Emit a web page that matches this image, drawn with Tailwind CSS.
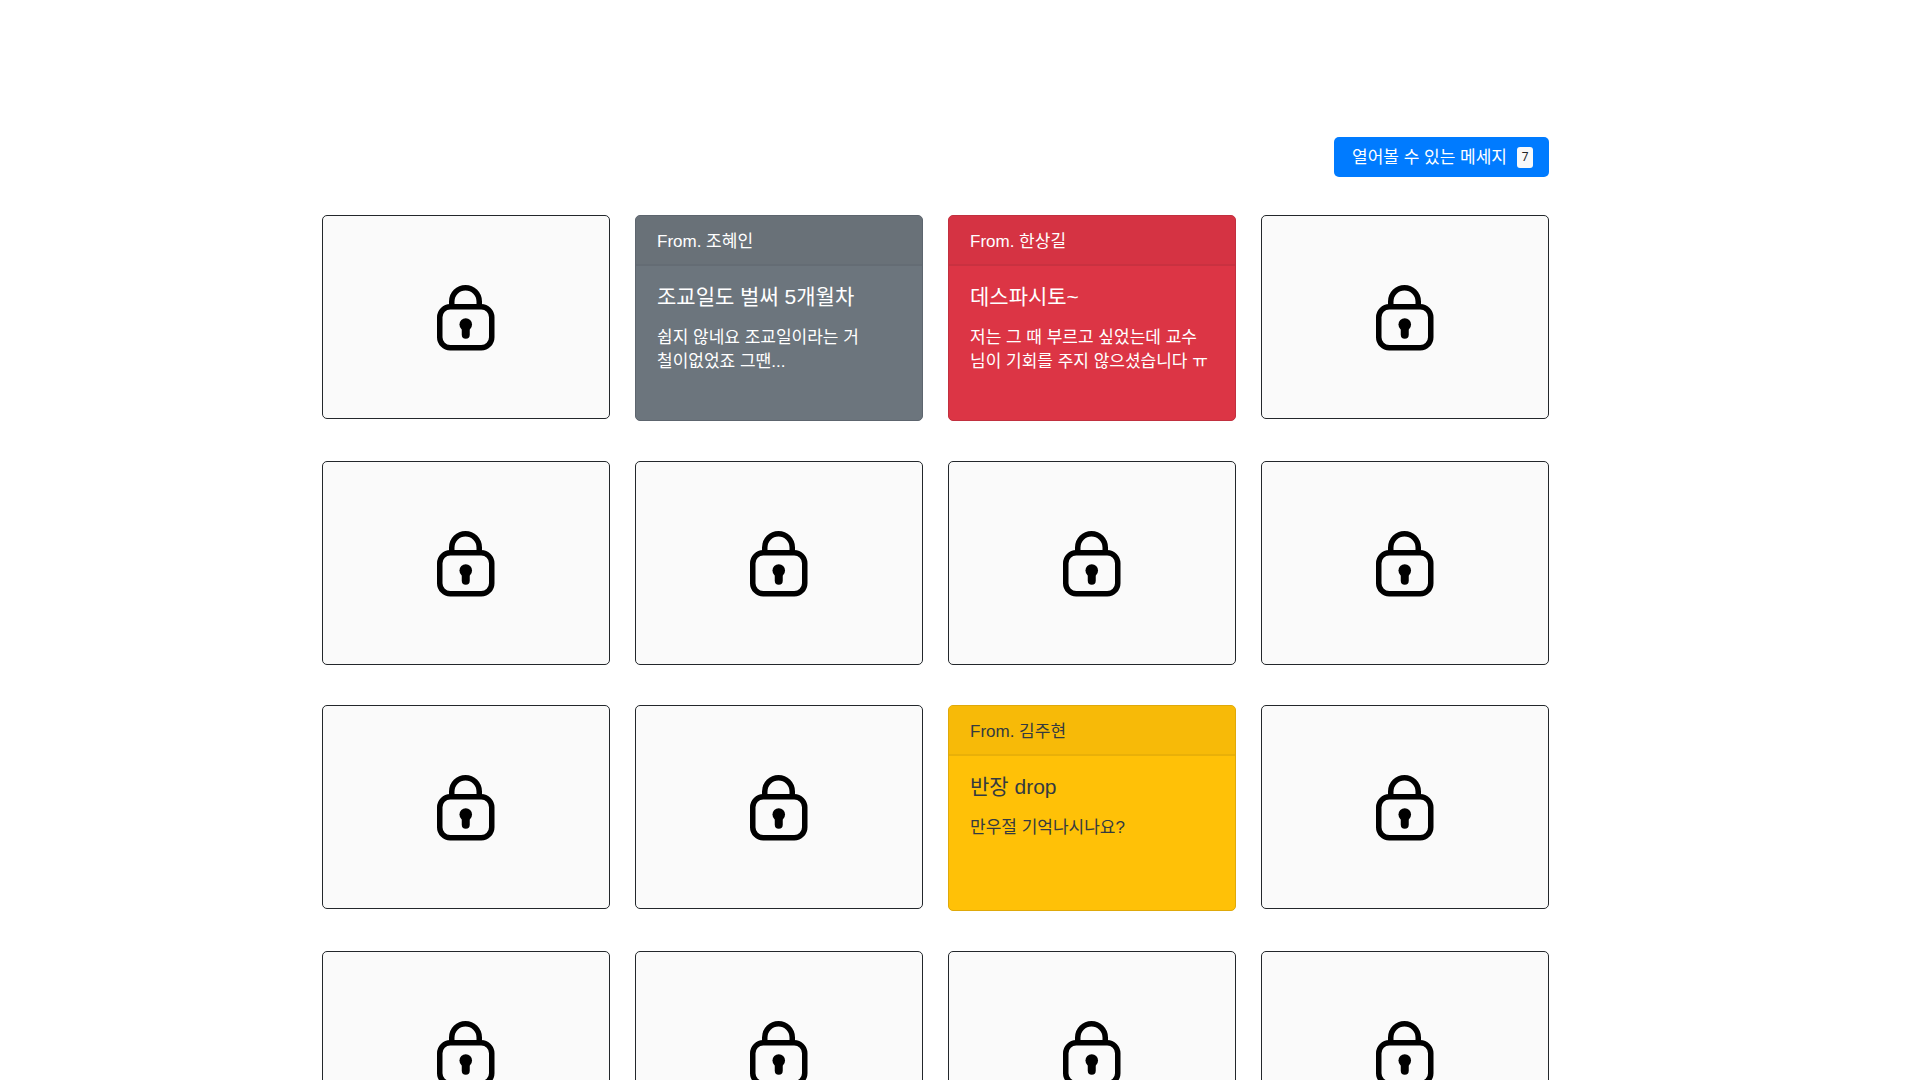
<!DOCTYPE html>
<html lang="ko">
<head>
<meta charset="utf-8">
<meta name="viewport" content="width=device-width, initial-scale=1">
<title>메세지</title>
<script src="https://cdn.jsdelivr.net/npm/@tailwindcss/browser@4"></script>
</head>
<body class="bg-white font-['Liberation_Sans','Noto_Sans_CJK_KR',sans-serif] text-[17px] leading-6 text-white">
<svg class="hidden" aria-hidden="true">
  <symbol id="lock" viewBox="0 0 58 68">
    <path d="M14.75 23V18.5a13.75 13.75 0 0 1 27.5 0V23" fill="none" stroke="#000" stroke-width="5.5"/>
    <rect x="2.75" y="23.75" width="52" height="41" rx="10.5" fill="none" stroke="#000" stroke-width="5.5"/>
    <circle cx="28.75" cy="41.5" r="6.3"/>
    <path d="M28.75 42v9.8" stroke="#000" stroke-width="8" stroke-linecap="round"/>
  </symbol>
</svg>
<main class="mx-auto w-full max-w-[1276px] pt-[137px] pr-[49px] pb-10">
  <div class="mb-[38px] flex justify-end">
    <button type="button" class="flex h-10 items-center gap-[10px] rounded-[5px] bg-[#007bff] pr-4 pl-[18px]">
      <span class="pt-0.5">열어볼 수 있는 메세지</span>
      <span class="flex h-[21px] w-4 items-center justify-center rounded-[3px] bg-[#f8f9fa] font-[Roboto,sans-serif] text-xs text-[#212529]">7</span>
    </button>
  </div>
  <div class="grid grid-cols-4 items-start gap-x-[25px] gap-y-10">
    <article class="flex h-[204px] items-center justify-center rounded-[5px] border border-[#23272b] bg-[#fafafa]"><svg class="h-[68px] w-[58px]" role="img" aria-label="잠긴 메세지"><use href="#lock"/></svg></article>
    <article class="h-[206px] overflow-hidden rounded-[5px] border border-[#5d656e] bg-[#6c757d]">
      <header class="border-b-2 border-[#646c74] bg-[#697178] px-[21px] pt-[14px] pb-[10px]">From. 조혜인</header>
      <div class="px-[21px] py-4">
        <h2 class="mb-[14px] text-[21px] leading-[30px]">조교일도 벌써 5개월차</h2>
        <p>쉽지 않네요 조교일이라는 거<br>철이없었죠 그땐...</p>
      </div>
    </article>
    <article class="h-[206px] overflow-hidden rounded-[5px] border border-[#c1303f] bg-[#dc3545]">
      <header class="border-b-2 border-[#c93140] bg-[#d53343] px-[21px] pt-[14px] pb-[10px]">From. 한상길</header>
      <div class="px-[21px] py-4">
        <h2 class="mb-[14px] text-[21px] leading-[30px]">데스파시토~</h2>
        <p class="whitespace-nowrap">저는 그 때 부르고 싶었는데 교수<br>님이 기회를 주지 않으셨습니다 ㅠ</p>
      </div>
    </article>
    <article class="flex h-[204px] items-center justify-center rounded-[5px] border border-[#23272b] bg-[#fafafa]"><svg class="h-[68px] w-[58px]" role="img" aria-label="잠긴 메세지"><use href="#lock"/></svg></article>

    <article class="flex h-[204px] items-center justify-center rounded-[5px] border border-[#23272b] bg-[#fafafa]"><svg class="h-[68px] w-[58px]" role="img" aria-label="잠긴 메세지"><use href="#lock"/></svg></article>
    <article class="flex h-[204px] items-center justify-center rounded-[5px] border border-[#23272b] bg-[#fafafa]"><svg class="h-[68px] w-[58px]" role="img" aria-label="잠긴 메세지"><use href="#lock"/></svg></article>
    <article class="flex h-[204px] items-center justify-center rounded-[5px] border border-[#23272b] bg-[#fafafa]"><svg class="h-[68px] w-[58px]" role="img" aria-label="잠긴 메세지"><use href="#lock"/></svg></article>
    <article class="flex h-[204px] items-center justify-center rounded-[5px] border border-[#23272b] bg-[#fafafa]"><svg class="h-[68px] w-[58px]" role="img" aria-label="잠긴 메세지"><use href="#lock"/></svg></article>

    <article class="flex h-[204px] items-center justify-center rounded-[5px] border border-[#23272b] bg-[#fafafa]"><svg class="h-[68px] w-[58px]" role="img" aria-label="잠긴 메세지"><use href="#lock"/></svg></article>
    <article class="flex h-[204px] items-center justify-center rounded-[5px] border border-[#23272b] bg-[#fafafa]"><svg class="h-[68px] w-[58px]" role="img" aria-label="잠긴 메세지"><use href="#lock"/></svg></article>
    <article class="h-[206px] overflow-hidden rounded-[5px] border border-[#dfa90a] bg-[#ffc107] text-[#343a40]">
      <header class="border-b-2 border-[#e9b008] bg-[#f7ba08] px-[21px] pt-[14px] pb-[10px]">From. 김주현</header>
      <div class="px-[21px] py-4">
        <h2 class="mb-[14px] text-[21px] leading-[30px]">반장 drop</h2>
        <p>만우절 기억나시나요?</p>
      </div>
    </article>
    <article class="flex h-[204px] items-center justify-center rounded-[5px] border border-[#23272b] bg-[#fafafa]"><svg class="h-[68px] w-[58px]" role="img" aria-label="잠긴 메세지"><use href="#lock"/></svg></article>

    <article class="flex h-[204px] items-center justify-center rounded-[5px] border border-[#23272b] bg-[#fafafa]"><svg class="h-[68px] w-[58px]" role="img" aria-label="잠긴 메세지"><use href="#lock"/></svg></article>
    <article class="flex h-[204px] items-center justify-center rounded-[5px] border border-[#23272b] bg-[#fafafa]"><svg class="h-[68px] w-[58px]" role="img" aria-label="잠긴 메세지"><use href="#lock"/></svg></article>
    <article class="flex h-[204px] items-center justify-center rounded-[5px] border border-[#23272b] bg-[#fafafa]"><svg class="h-[68px] w-[58px]" role="img" aria-label="잠긴 메세지"><use href="#lock"/></svg></article>
    <article class="flex h-[204px] items-center justify-center rounded-[5px] border border-[#23272b] bg-[#fafafa]"><svg class="h-[68px] w-[58px]" role="img" aria-label="잠긴 메세지"><use href="#lock"/></svg></article>
  </div>
</main>
</body>
</html>
